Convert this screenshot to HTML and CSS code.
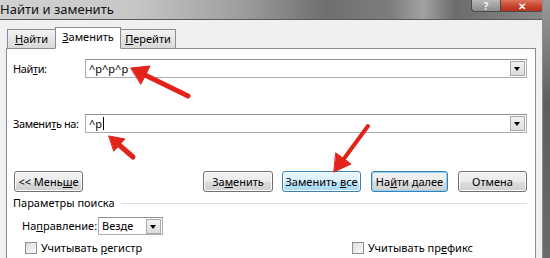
FILE: index.html
```html
<!DOCTYPE html>
<html lang="ru">
<head>
    <meta charset="UTF-8">
    <title>Найти и заменить</title>
    <link rel="stylesheet" href="styles.css">
</head>
<body>
    <div class="window">
        <div class="titlebar">
            <span class="title">Найти и заменить</span>
            <div class="caption-buttons">
                <span class="cap help">?</span>
                <span class="cap close">&#x2715;</span>
            </div>
        </div>

        <div class="dialog">
            <div class="tabs">
                <div class="tab"><u>Н</u>айти</div>
                <div class="tab active"><u>З</u>аменить</div>
                <div class="tab"><u>П</u>ерейти</div>
            </div>

            <div class="panel">
                <div class="field-row first">
                    <label class="field-label">Най<u>т</u>и:</label>
                    <div class="combo">
                        <span class="combo-value">^p^p^p</span>
                        <span class="drop"></span>
                    </div>
                </div>

                <div class="field-row second">
                    <label class="field-label">Замени<u>т</u>ь на:</label>
                    <div class="combo">
                        <span class="combo-value">^p<span class="caret"></span></span>
                        <span class="drop"></span>
                    </div>
                </div>

                <div class="button-row">
                    <button class="btn less">&lt;&lt; Мень<u>ш</u>е</button>
                    <div class="button-group">
                        <button class="btn w-replace">За<u>м</u>енить</button>
                        <button class="btn hot w-all">Заменить <u>в</u>се</button>
                        <button class="btn default w-next">На<u>й</u>ти далее</button>
                        <button class="btn w-cancel">Отмена</button>
                    </div>
                </div>

                <div class="group-title">
                    <span>Параметры поиска</span>
                    <span class="group-line"></span>
                </div>

                <div class="direction-row">
                    <span class="dir-label">На<u>п</u>равление:</span>
                    <div class="select">
                        <span class="select-value">Везде</span>
                        <span class="drop"></span>
                    </div>
                </div>

                <div class="check-row">
                    <span class="check first-check"><span class="box"></span><span>Учитывать <u>р</u>егистр</span></span>
                    <span class="check"><span class="box"></span><span>Учитывать пр<u>е</u>фикс</span></span>
                </div>
            </div>
        </div>
    </div>

    <!-- red arrows drawn on top of the screenshot -->
    <svg class="arrows" width="550" height="258" viewBox="0 0 550 258">
        <g fill="#e2231a" stroke="#e2231a" stroke-linecap="round">
            <line x1="188" y1="96" x2="145" y2="75" stroke-width="5"/>
            <polygon points="131,68 150,66 141,84" stroke-width="1"/>

            <line x1="133" y1="157" x2="118" y2="144" stroke-width="5"/>
            <polygon points="109,136 125,139 114,151" stroke-width="1"/>

            <line x1="368" y1="126" x2="343" y2="160" stroke-width="4"/>
            <polygon points="334,172 351,164 336,153" stroke-width="1"/>
        </g>
    </svg>
</body>
</html>
```

FILE: styles.css
```css
body {
    margin: 0;
    width: 550px;
    height: 258px;
    overflow: hidden;
    background: linear-gradient(to bottom, #9a9a9a, #5e5e5e 40%, #6a6a6a);
    font-family: "Noto Sans", "Open Sans", sans-serif;
    font-size: 11px;
    line-height: 14px;
    color: #000;
    position: relative;
    white-space: nowrap;
}
u {
    text-decoration: underline;
    text-underline-offset: 1px;
}
.window {
    width: 543px;
    height: 258px;
    background: #f0f0f0;
    border-right: 1px solid #8d8d8d;
    box-sizing: border-box;
    overflow: hidden;
}
.titlebar {
    height: 20px;
    display: flex;
    justify-content: space-between;
    align-items: flex-start;
    background: linear-gradient(to right, #d2d2d2 0%, #c6c6c6 25%, #9c9c9c 45%, #6f6f6f 60%, #7d7d7d 72%, #a2a2a2 78%, #6c6c6c 84%, #888 100%);
    border-bottom: 1px solid #5a5a5a;
    box-sizing: border-box;
}
.title {
    font-size: 13px;
    line-height: 19px;
    color: #111;
}
.caption-buttons {
    display: flex;
    margin-right: -1px;
}
.cap {
    height: 12px;
    display: flex;
    align-items: center;
    justify-content: center;
    color: #f4f4f4;
    font-weight: bold;
    font-size: 10px;
    border: 1px solid #4a4a4a;
    border-top: none;
    box-sizing: border-box;
}
.help {
    width: 29px;
    background: linear-gradient(to bottom, #b9b9b9, #8c8c8c);
    border-radius: 0 0 0 4px;
    border-right: none;
}
.close {
    width: 43px;
    background: linear-gradient(to bottom, #e0755e, #c7432a 55%, #b8321c);
    border-radius: 0 0 4px 0;
    font-size: 10px;
}
.dialog {
    padding: 7px 6px 0 6px;
}
.tabs {
    display: flex;
    align-items: flex-end;
    padding-left: 1px;
    margin-bottom: -1px;
    position: relative;
}
.tab {
    height: 20px;
    line-height: 18px;
    text-align: center;
    border: 1px solid #898c95;
    margin-left: -1px;
    background: linear-gradient(to bottom, #f4f4f4, #e4e4e4 50%, #d9d9d9);
    box-sizing: border-box;
}
.tab:first-child {
    width: 49px;
    margin-left: 0;
}
.tab.active {
    width: 66px;
    height: 22px;
    line-height: 18px;
    background: #fff;
    border-bottom-color: #fff;
    position: relative;
    z-index: 1;
}
.tab:last-child {
    width: 56px;
}
.panel {
    background: #fff;
    border: 1px solid #898c95;
    height: 220px;
    padding: 10px 8px 0 6px;
}
.field-row {
    display: flex;
    align-items: center;
}
.field-row.second {
    margin-top: 36px;
}
.field-label {
    width: 72px;
    flex-shrink: 0;
    letter-spacing: -0.4px;
}
.combo {
    flex: 1;
    height: 19px;
    display: flex;
    align-items: center;
    border: 1px solid #abadb3;
    border-top-color: #8e8f8f;
    box-sizing: border-box;
}
.combo-value {
    flex: 1;
    padding-left: 3px;
    display: flex;
    align-items: center;
}
.caret {
    display: inline-block;
    width: 1px;
    height: 13px;
    background: #000;
    margin-left: 1px;
}
.drop {
    width: 15px;
    height: 15px;
    margin-right: 1px;
    border: 1px solid #a9a9a9;
    box-sizing: border-box;
    background: linear-gradient(to bottom, #f2f2f2, #dcdcdc);
    position: relative;
    flex-shrink: 0;
}
.drop::after {
    content: "";
    position: absolute;
    left: 3px;
    top: 5px;
    border-left: 3.5px solid transparent;
    border-right: 3.5px solid transparent;
    border-top: 4px solid #000;
}
.button-row {
    display: flex;
    margin-top: 38px;
    padding-left: 1px;
}
.button-group {
    margin-left: auto;
    display: flex;
    gap: 10px;
}
.btn {
    height: 21px;
    font-family: inherit;
    font-size: 11px;
    line-height: 14px;
    white-space: nowrap;
    color: #000;
    padding: 0;
    border: 1px solid #707070;
    border-radius: 3px;
    background: linear-gradient(to bottom, #f2f2f2 0%, #ebebeb 50%, #dddddd 51%, #cfcfcf 100%);
    box-shadow: inset 0 0 0 1px #fcfcfc;
    flex-shrink: 0;
}
.less {
    width: 69px;
}
.w-replace {
    width: 70px;
    margin-right: -1px;
}
.w-all {
    width: 79px;
}
.w-next {
    width: 77px;
}
.w-cancel {
    width: 69px;
}
.btn.hot {
    border-color: #3c7fb1;
    background: linear-gradient(to bottom, #eaf6fd 0%, #d9f0fc 50%, #bee6fd 51%, #a7d9f5 100%);
}
.btn.default {
    border-color: #3c7fb1;
    box-shadow: inset 0 0 0 1px #90d4f5;
}
.group-title {
    display: flex;
    align-items: center;
    margin-top: 3px;
    height: 16px;
}
.group-line {
    flex: 1;
    border-top: 1px solid #d5dfe5;
    margin-left: 6px;
    margin-top: 1px;
}
.direction-row {
    display: flex;
    align-items: center;
    margin-top: 6px;
    padding-left: 9px;
}
.dir-label {
    width: 76px;
    flex-shrink: 0;
}
.select {
    width: 65px;
    height: 18px;
    display: flex;
    align-items: center;
    border: 1px solid #abadb3;
    border-top-color: #8e8f8f;
    box-sizing: border-box;
}
.select-value {
    flex: 1;
    padding-left: 3px;
}
.check-row {
    display: flex;
    align-items: center;
    margin-top: 6px;
    padding-left: 12px;
}
.check {
    display: flex;
    align-items: center;
}
.first-check {
    width: 327px;
    flex-shrink: 0;
}
.box {
    width: 12px;
    height: 12px;
    border: 1px solid #8f8f8f;
    box-sizing: border-box;
    background: linear-gradient(135deg, #dcdcdc, #fbfbfb);
    margin-right: 4px;
    flex-shrink: 0;
}
.arrows {
    position: absolute;
    left: 0;
    top: 0;
    pointer-events: none;
}
```
